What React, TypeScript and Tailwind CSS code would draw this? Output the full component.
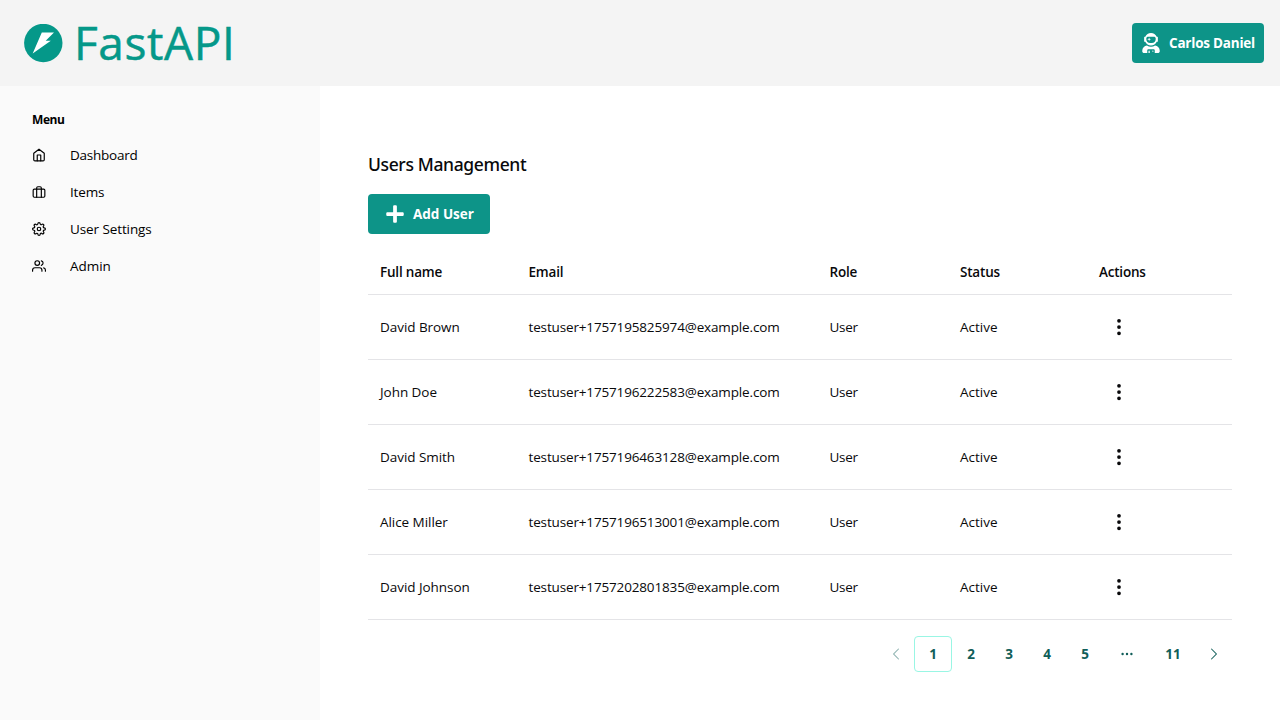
import type { ReactNode } from 'react';
import { FiHome, FiBriefcase, FiSettings, FiUsers } from 'react-icons/fi';
import { FaUserAstronaut, FaPlus } from 'react-icons/fa';
import { BsThreeDotsVertical } from 'react-icons/bs';
import { HiChevronLeft, HiChevronRight, HiMiniEllipsisHorizontal } from 'react-icons/hi2';

const users = [
  { name: 'David Brown', email: 'testuser+1757195825974@example.com' },
  { name: 'John Doe', email: 'testuser+1757196222583@example.com' },
  { name: 'David Smith', email: 'testuser+1757196463128@example.com' },
  { name: 'Alice Miller', email: 'testuser+1757196513001@example.com' },
  { name: 'David Johnson', email: 'testuser+1757202801835@example.com' },
];

const menu = [
  { label: 'Dashboard', icon: FiHome, style: 'tracking-[-0.25px]' },
  { label: 'Items', icon: FiBriefcase, style: 'tracking-[-0.15px]' },
  { label: 'User Settings', icon: FiSettings, style: 'tracking-[-0.1px]' },
  { label: 'Admin', icon: FiUsers, style: 'tracking-[-0.05px]' },
];

const columns = 'grid grid-cols-[148.5px_301px_130.5px_139px_145px] items-center border-b border-[#e4e4e7] text-[13.5px]';

function Logo() {
  return (
    <div className="flex items-center text-[#059889]">
      <svg className="size-[39px]" viewBox="0 0 39 39">
        <circle cx="19.3" cy="19" r="19.2" fill="currentColor" />
        <path d="M17.8 8.5H30L21.7 16.8H26.8L8.7 29.4Z" fill="#fff" />
      </svg>
      <span className="mb-[3px] ml-[11px] text-[46px] leading-[50px] tracking-[0.6px] [-webkit-text-stroke:0.5px_#059889]">
        FastAPI
      </span>
    </div>
  );
}

function PageButton({ children, active = false }: { children: ReactNode; active?: boolean }) {
  return (
    <button
      className={
        active
          ? 'flex h-9 w-[38px] items-center justify-center rounded border border-[#99f6e4]'
          : 'flex h-9 min-w-[38px] items-center justify-center'
      }
    >
      {children}
    </button>
  );
}

export default function App() {
  return (
    <div className="flex h-[720px] w-[1280px] flex-col overflow-hidden bg-white font-['Open_Sans','Noto_Sans',sans-serif] text-[#09090b]">
      <header className="flex h-[86px] shrink-0 items-center justify-between bg-[#f4f4f4] pr-4 pl-6">
        <Logo />
        <button className="flex h-10 w-[132px] items-center rounded bg-[#0d9488] pl-[9px] text-[13.5px] font-bold text-white">
          <FaUserAstronaut className="size-5" />
          <span className="ml-2 tracking-[-0.22px] whitespace-nowrap">Carlos Daniel</span>
        </button>
      </header>
      <div className="flex flex-1">
        <aside className="w-80 bg-[#fafafa] px-8 pt-[26px]">
          <p className="text-xs leading-4 font-bold tracking-[-0.4px] text-black">Menu</p>
          <nav className="mt-2 flex flex-col">
            {menu.map(({ label, icon: Icon, style }) => (
              <a key={label} className="flex h-[37px] items-center text-[13.5px] text-black">
                <Icon className="size-3.5" />
                <span className={`mt-0.5 ml-6 ${style}`}>{label}</span>
              </a>
            ))}
          </nav>
        </aside>
        <main className="flex-1 px-12 pt-[63px]">
          <h1 className="font-['Noto_Sans',sans-serif] text-[17.5px] leading-[30px] font-medium tracking-[-0.37px]">
            Users Management
          </h1>
          <button className="mt-[15px] flex h-10 w-[122px] items-center rounded bg-[#0d9488] pl-[17px] text-[13.5px] font-bold text-white">
            <FaPlus className="size-5" />
            <span className="ml-2 whitespace-nowrap">Add User</span>
          </button>
          <div className={`mt-4 h-[45px] font-semibold ${columns}`}>
            {['Full name', 'Email', 'Role', 'Status', 'Actions'].map((h) => (
              <span key={h} className="pl-3 tracking-[-0.2px]">{h}</span>
            ))}
          </div>
          {users.map((u) => (
            <div key={u.email} className={`h-[65px] ${columns}`}>
              <span className="pl-3 tracking-[-0.05px]">{u.name}</span>
              <span className="pl-3 tracking-[-0.15px]">{u.email}</span>
              <span className="pl-3 tracking-[-0.3px]">User</span>
              <span className="pl-3">Active</span>
              <button className="ml-[22px] w-5">
                <BsThreeDotsVertical className="size-5" />
              </button>
            </div>
          ))}
          <nav className="mt-4 flex justify-end text-[13.5px] font-bold text-[#115e59]">
            <button className="flex h-9 w-9 items-center justify-center opacity-50">
              <HiChevronLeft className="size-4" />
            </button>
            <PageButton active>1</PageButton>
            <PageButton>2</PageButton>
            <PageButton>3</PageButton>
            <PageButton>4</PageButton>
            <PageButton>5</PageButton>
            <span className="flex h-9 w-[46px] items-center justify-center">
              <HiMiniEllipsisHorizontal className="size-4" />
            </span>
            <span className="flex h-9 w-[46px] items-center justify-center">11</span>
            <button className="flex h-9 w-9 items-center justify-center">
              <HiChevronRight className="size-4" />
            </button>
          </nav>
        </main>
      </div>
    </div>
  );
}
